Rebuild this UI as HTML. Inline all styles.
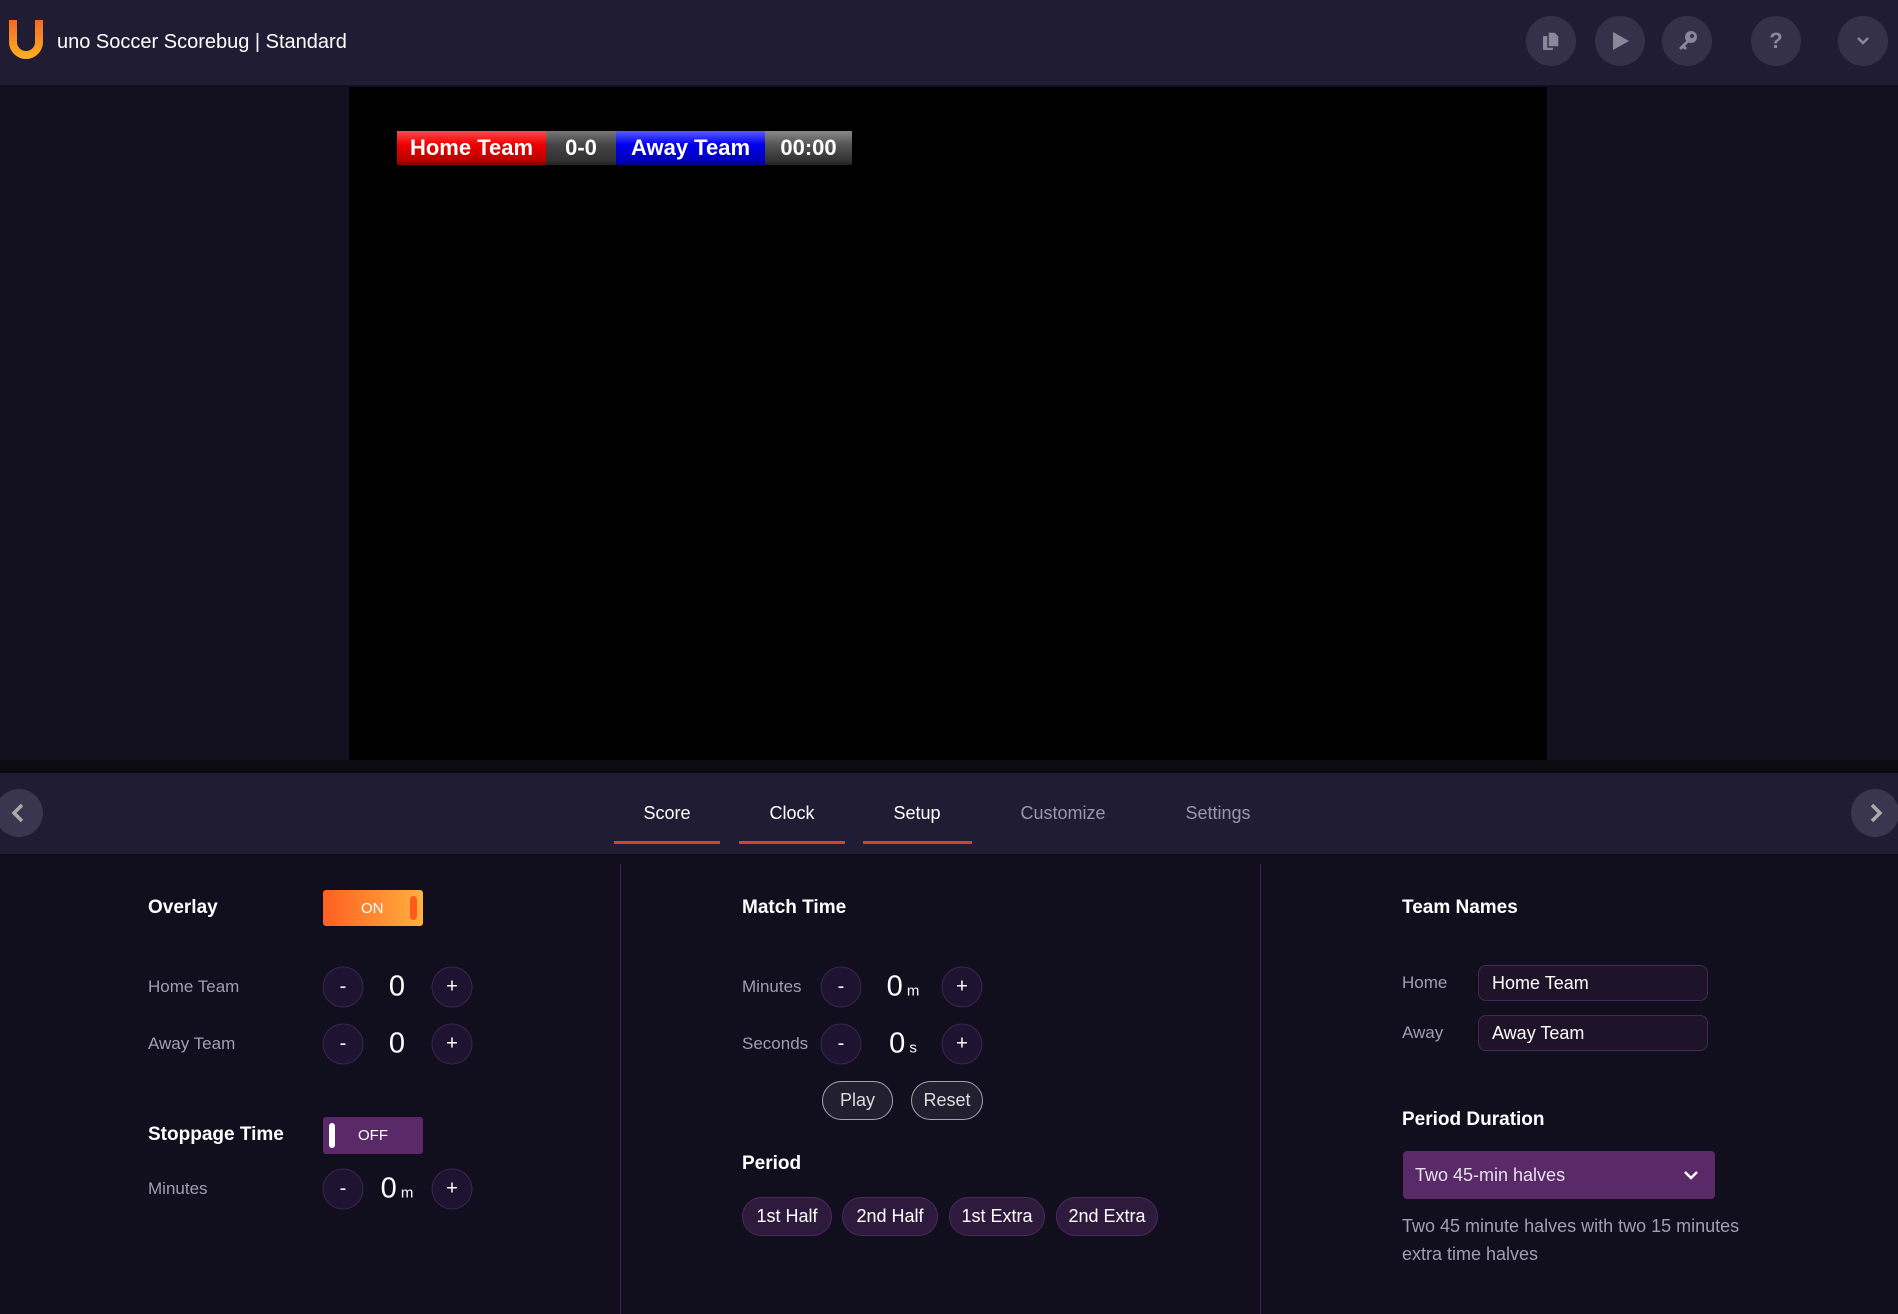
<!DOCTYPE html>
<html><head><meta charset="utf-8"><style>
*{box-sizing:border-box;margin:0;padding:0}
body{width:1898px;height:1314px;overflow:hidden;background:#110f1e;font-family:"Liberation Sans",sans-serif;color:#fff;position:relative}
.a{position:absolute}
.hdr{left:0;top:0;width:1898px;height:86px;background:#201c33;border-bottom:1px solid #15121f}
.ic{width:50px;height:50px;border-radius:50%;background:#35314a;top:16px;display:flex;align-items:center;justify-content:center}
.side{top:87px;height:673px;background:#13111f}
.tab{font-size:18px;top:803px;transform:translateX(-50%)}
.ul{top:841px;height:3px;background:#c9482c}
.lbl{font-size:17px;color:#a19eb0;transform:translateY(-50%)}
.hd{font-size:19px;font-weight:bold;transform:translateY(-50%)}
.cb{width:41px;height:41px;border-radius:50%;background:#1e1330;border:1px solid #3d2450;display:flex;align-items:center;justify-content:center;font-size:20px;transform:translate(-50%,-50%)}
.val{font-size:29px;transform:translate(-50%,-50%)}
.val small{font-size:15px}
.pill{height:39px;border-radius:20px;background:#2d1a3d;border:1px solid #4a2a5a;font-size:18px;display:flex;align-items:center;justify-content:center}
.ob{height:39px;border-radius:20px;background:#222030;border:1px solid #a5a2b0;font-size:18px;color:#ddd;display:flex;align-items:center;justify-content:center}
.inp{width:230px;height:36px;border-radius:8px;background:#1e1329;border:1px solid #432952;font-size:18px;padding-left:13px;display:flex;align-items:center}
.sb{top:131px;height:34px;display:flex;align-items:center;justify-content:center;font-size:22px;font-weight:bold;color:#fff}
</style></head><body>
<div class="a hdr"></div>
<svg class="a" style="left:6px;top:20px" width="40" height="40" viewBox="0 0 40 40"><defs><linearGradient id="g" x1="0" y1="0" x2="0" y2="1"><stop offset="0" stop-color="#f06a2a"/><stop offset="1" stop-color="#ffb020"/></linearGradient></defs><path d="M3 0 V22 A17 17 0 0 0 37 22 V0 H29 V22 A9 9 0 0 1 11 22 V0 Z" fill="url(#g)"/></svg>
<div class="a" style="left:57px;top:31px;font-size:20px">uno Soccer Scorebug | Standard</div>
<div class="a ic" style="left:1526px"><svg width="20" height="22" viewBox="0 0 20 22"><rect x="2" y="6" width="10" height="14" rx="1" fill="#8b879a"/><path d="M7 2h7l4 4v11H7z" fill="#8b879a" stroke="#35314a" stroke-width="1.5"/></svg></div>
<div class="a ic" style="left:1595px"><svg width="20" height="22"><path d="M3 2L19 11L3 20Z" fill="#8b879a"/></svg></div>
<div class="a ic" style="left:1662px"><svg width="22" height="22" viewBox="0 0 22 22"><circle cx="15" cy="7" r="6" fill="#8b879a"/><circle cx="16" cy="6" r="2" fill="#35314a"/><path d="M11 10L3 18l2 2 2-2 2 2 2-2-2-2 4-4z" fill="#8b879a"/></svg></div>
<div class="a ic" style="left:1751px;color:#8b879a;font-weight:bold;font-size:22px">?</div>
<div class="a ic" style="left:1838px"><svg width="14" height="10"><path d="M2 2l5 5 5-5" stroke="#8b879a" stroke-width="2.5" fill="none"/></svg></div>
<div class="a side" style="left:0;width:349px"></div>
<div class="a side" style="left:1547px;width:351px"></div>
<div class="a" style="left:349px;top:87px;width:1198px;height:673px;background:#000"></div>
<div class="a sb" style="left:397px;width:149px;background:linear-gradient(#ff4a4a,#e00 40%,#b00 85%,#800)">Home Team</div>
<div class="a sb" style="left:546px;width:70px;background:linear-gradient(#777,#444 40%,#333 85%,#222)">0-0</div>
<div class="a sb" style="left:616px;width:149px;background:linear-gradient(#5a5aff,#00e 40%,#00b 85%,#008)">Away Team</div>
<div class="a sb" style="left:765px;width:87px;background:linear-gradient(#888,#555 40%,#333 85%,#222)">00:00</div>
<div class="a" style="left:0;top:760px;width:1898px;height:13px;background:#0c0b10"></div>
<div class="a" style="left:0;top:773px;width:1898px;height:81px;background:#201c33"></div>
<div class="a" style="left:-5px;top:789px;width:48px;height:48px;border-radius:50%;background:#3a3650"></div>
<svg class="a" style="left:10px;top:803px" width="16" height="20"><path d="M12 2L4 10l8 8" stroke="#aaa" stroke-width="3.5" fill="none"/></svg>
<div class="a" style="left:1851px;top:789px;width:48px;height:48px;border-radius:50%;background:#3a3650"></div>
<svg class="a" style="left:1868px;top:803px" width="16" height="20"><path d="M4 2l8 8-8 8" stroke="#aaa" stroke-width="3.5" fill="none"/></svg>
<div class="a tab" style="left:667px">Score</div>
<div class="a tab" style="left:792px">Clock</div>
<div class="a tab" style="left:917px">Setup</div>
<div class="a tab" style="left:1063px;color:#9a96aa">Customize</div>
<div class="a tab" style="left:1218px;color:#9a96aa">Settings</div>
<div class="a ul" style="left:614px;width:106px"></div>
<div class="a ul" style="left:739px;width:106px"></div>
<div class="a ul" style="left:863px;width:109px"></div>
<div class="a" style="left:620px;top:864px;width:1px;height:450px;background:#3e2550"></div>
<div class="a" style="left:1260px;top:864px;width:1px;height:450px;background:#3e2550"></div>
<div class="a hd" style="left:148px;top:908px">Overlay</div>
<div class="a" style="left:323px;top:890px;width:100px;height:36px;border-radius:3px;background:linear-gradient(90deg,#ff6020,#ffb040);font-size:15px;display:flex;align-items:center;padding-left:38px">ON<div class="a" style="right:6px;top:6px;width:7px;height:24px;border-radius:4px;background:#ff5a1a"></div></div>
<div class="a lbl" style="left:148px;top:987px">Home Team</div>
<div class="a cb" style="left:343px;top:987px">-</div><div class="a val" style="left:397px;top:987px">0</div><div class="a cb" style="left:452px;top:987px">+</div>
<div class="a lbl" style="left:148px;top:1044px">Away Team</div>
<div class="a cb" style="left:343px;top:1044px">-</div><div class="a val" style="left:397px;top:1044px">0</div><div class="a cb" style="left:452px;top:1044px">+</div>
<div class="a hd" style="left:148px;top:1135px">Stoppage Time</div>
<div class="a" style="left:323px;top:1117px;width:100px;height:37px;border-radius:3px;background:#5a2a68;font-size:15px;display:flex;align-items:center;padding-left:35px">OFF<div class="a" style="left:6px;top:6px;width:6px;height:25px;border-radius:3px;background:#fff"></div></div>
<div class="a lbl" style="left:148px;top:1189px">Minutes</div>
<div class="a cb" style="left:343px;top:1189px">-</div><div class="a val" style="left:397px;top:1189px">0<small> m</small></div><div class="a cb" style="left:452px;top:1189px">+</div>
<div class="a hd" style="left:742px;top:908px">Match Time</div>
<div class="a lbl" style="left:742px;top:987px">Minutes</div>
<div class="a cb" style="left:841px;top:987px">-</div><div class="a val" style="left:903px;top:987px">0<small> m</small></div><div class="a cb" style="left:962px;top:987px">+</div>
<div class="a lbl" style="left:742px;top:1044px">Seconds</div>
<div class="a cb" style="left:841px;top:1044px">-</div><div class="a val" style="left:903px;top:1044px">0<small> s</small></div><div class="a cb" style="left:962px;top:1044px">+</div>
<div class="a ob" style="left:822px;top:1081px;width:71px">Play</div>
<div class="a ob" style="left:911px;top:1081px;width:72px">Reset</div>
<div class="a hd" style="left:742px;top:1164px">Period</div>
<div class="a pill" style="left:742px;top:1197px;width:90px">1st Half</div>
<div class="a pill" style="left:842px;top:1197px;width:96px">2nd Half</div>
<div class="a pill" style="left:949px;top:1197px;width:96px">1st Extra</div>
<div class="a pill" style="left:1056px;top:1197px;width:102px">2nd Extra</div>
<div class="a hd" style="left:1402px;top:908px">Team Names</div>
<div class="a lbl" style="left:1402px;top:983px">Home</div>
<div class="a inp" style="left:1478px;top:965px">Home Team</div>
<div class="a lbl" style="left:1402px;top:1033px">Away</div>
<div class="a inp" style="left:1478px;top:1015px">Away Team</div>
<div class="a hd" style="left:1402px;top:1120px">Period Duration</div>
<div class="a" style="left:1403px;top:1151px;width:312px;height:48px;border-radius:4px;background:#5a2a68;font-size:18px;color:#e6e0ea;display:flex;align-items:center;padding-left:12px">Two 45-min halves<svg class="a" style="right:16px;top:18px" width="16" height="12"><path d="M2 3l6 6 6-6" stroke="#fff" stroke-width="2.5" fill="none"/></svg></div>
<div class="a" style="left:1402px;top:1212px;width:360px;font-size:18px;line-height:28px;color:#a19eb0">Two 45 minute halves with two 15 minutes extra time halves</div>
</body></html>
